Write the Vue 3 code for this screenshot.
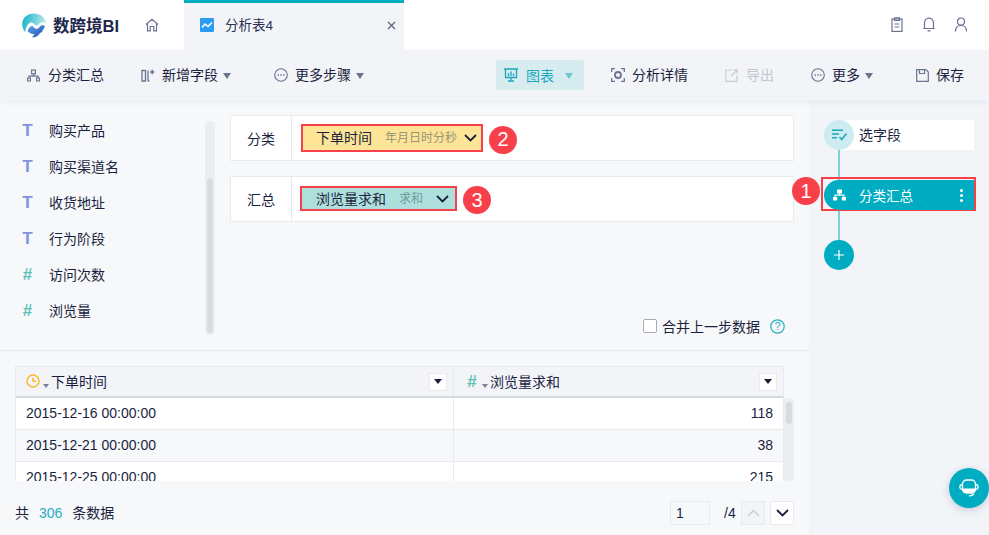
<script setup>
const fields = [
  { t: 'T', name: '购买产品' },
  { t: 'T', name: '购买渠道名' },
  { t: 'T', name: '收货地址' },
  { t: 'T', name: '行为阶段' },
  { t: '#', name: '访问次数' },
  { t: '#', name: '浏览量' }
]
const rows = [
  ['2015-12-16 00:00:00', '118'],
  ['2015-12-21 00:00:00', '38'],
  ['2015-12-25 00:00:00', '215']
]
</script>

<template>
  <div class="app">
    <header class="top">
      <div class="brand">
        <svg class="logo" width="24" height="25" viewBox="0 0 24 25">
          <defs>
            <linearGradient id="lg1" x1="0" y1="0.300" x2="1" y2="0.500">
              <stop offset="0" stop-color="#12b4c8" />
              <stop offset="1" stop-color="#c4ecee" />
            </linearGradient>
            <linearGradient id="lg2" x1="0" y1="0" x2="1" y2="1">
              <stop offset="0" stop-color="#5aa7ea" />
              <stop offset="1" stop-color="#2148b0" />
            </linearGradient>
          </defs>
          <path d="M3 19C-1 14 -.5 7 3.500 3.500C8 -.5 15 -.5 20 3C22.500 5 23.800 8 24 11C22 8.500 19 8.500 17 11C15.500 13 14 13 12.500 11.500C10 8.500 7.500 9 5.500 12C4.300 14 3.500 16.500 3 19Z" fill="url(#lg1)" />
          <path d="M5.500 18C7 14.500 9 12 11 13.500C13 16 15.500 17 17.500 14C19 12 21 11.500 23 13C21.800 14.500 22.500 16 20.500 17C21 18.500 19.500 19.500 18 20C16.500 22.500 14 24.500 10 24.500C11 23.500 12 22 12.500 21C10 21.500 7.500 20 5.500 18Z" fill="url(#lg2)" />
        </svg>
        <span class="brand-text">数跨境BI</span>
        <svg class="home" width="14" height="14" viewBox="0 0 14 14" fill="none" stroke="#6b7392" stroke-width="1.200">
          <path d="M1 6.500L7 1.200L13 6.500M2.500 5.500V12.800H5.200V8.500H8.800V12.800H11.500V5.500" />
        </svg>
      </div>
      <div class="tab">
        <svg width="14" height="14" viewBox="0 0 14 14">
          <rect width="14" height="14" rx="1" fill="#2b9bf4" />
          <path d="M2 9.500L5 6L8 8.500L12 4.500" fill="none" stroke="#fff" stroke-width="1.600" />
        </svg>
        <span class="tab-name">分析表4</span>
        <svg class="tab-x" width="9" height="9" viewBox="0 0 9 9" stroke="#5f6680" stroke-width="1.300">
          <path d="M1 1L8 8M8 1L1 8" />
        </svg>
      </div>
      <div class="top-fill">
        <svg width="14" height="15" viewBox="0 0 14 15" fill="none" stroke="#6b7392" stroke-width="1.200">
          <rect x="2" y="2" width="10" height="12.400" />
          <path d="M4.500 .8H9.500V3.500H4.500ZM4.500 7H9.500M4.500 10H9.500" />
        </svg>
        <svg width="14" height="15" viewBox="0 0 14 15" fill="none" stroke="#6b7392" stroke-width="1.200">
          <path d="M2.500 11.500V6.500C2.500 3.500 4.300 1.200 7 1.200S11.500 3.500 11.500 6.500V11.500ZM1.200 11.500H12.800M5.500 13.800H8.500" />
        </svg>
        <svg width="14" height="15" viewBox="0 0 14 15" fill="none" stroke="#6b7392" stroke-width="1.200">
          <circle cx="7" cy="4.500" r="3.500" />
          <path d="M1.500 14.500C1.500 10.500 3.500 8.500 7 8.500S12.500 10.500 12.500 14.500" />
        </svg>
      </div>
    </header>

    <nav class="toolbar">
      <div class="tool t1">
        <svg width="13" height="13" viewBox="0 0 13 13" fill="none" stroke="#6b7392" stroke-width="1.200">
          <path d="M4.600 1.100H8.400V4.800H4.600ZM6.500 4.800V7.200M2 9V7.200H11V9M.6 9H3.400V12H.6ZM9.600 9H12.400V12H9.600Z" />
        </svg>
        <span>分类汇总</span>
      </div>
      <div class="tool t2">
        <svg width="14" height="14" viewBox="0 0 14 14" fill="none" stroke="#6b7392" stroke-width="1.300">
          <path d="M1 2.500H4.500V13H1ZM7 13V2.500M7 13H8.500M9 4H13.500M11.200 1.500V6.500" />
        </svg>
        <span>新增字段</span>
        <i class="caret"></i>
      </div>
      <div class="tool t3">
        <svg width="14" height="14" viewBox="0 0 14 14" fill="none" stroke="#6b7392" stroke-width="1.100">
          <circle cx="7" cy="7" r="6.300" />
          <path d="M3.600 7H5M6.300 7H7.700M9 7H10.400" stroke-width="1.300" />
        </svg>
        <span>更多步骤</span>
        <i class="caret"></i>
      </div>
      <div class="chart-btn">
        <svg width="14" height="14" viewBox="0 0 14 14" fill="none" stroke="#1aa8bd" stroke-width="1.300">
          <path d="M0 1H14M1.500 1.500V9.500H12.500V1.500M7 9.500V13M4 13H10" />
          <path d="M4.500 8V5M7 8V3.500M9.500 8V5.500" />
        </svg>
        <span>图表</span>
        <i class="caret teal"></i>
      </div>
      <div class="tool t5">
        <svg width="14" height="14" viewBox="0 0 14 14" fill="none" stroke="#6b7392" stroke-width="1.300">
          <path d="M.7 4V.7H4M10 .7H13.300V4M13.300 10V13.300H10M4 13.300H.7V10" />
          <circle cx="7" cy="7" r="3" stroke-width="1.800" />
        </svg>
        <span>分析详情</span>
      </div>
      <div class="tool t6 off">
        <svg width="13" height="13" viewBox="0 0 13 13" fill="none" stroke="#c9ccd6" stroke-width="1.200">
          <path d="M7 1H.8V12.300H12V6.500M6 7L12 1M8.500 .8H12.200V4.500" />
        </svg>
        <span>导出</span>
      </div>
      <div class="tool t7">
        <svg width="14" height="14" viewBox="0 0 14 14" fill="none" stroke="#6b7392" stroke-width="1.100">
          <circle cx="7" cy="7" r="6.300" />
          <path d="M3.600 7H5M6.300 7H7.700M9 7H10.400" stroke-width="1.300" />
        </svg>
        <span>更多</span>
        <i class="caret"></i>
      </div>
      <div class="tool t8">
        <svg width="13" height="13" viewBox="0 0 13 13" fill="none" stroke="#6b7392" stroke-width="1.200">
          <path d="M.7 .7H10L12.300 3V12.300H.7ZM3.500 .7V4.500H8.500V.7" />
        </svg>
        <span>保存</span>
      </div>
    </nav>

    <div class="body">
      <main class="work">
        <section class="setup">
          <aside class="fields">
            <ul class="field-list">
              <li v-for="f in fields" :key="f.name" class="field">
                <span class="ftype" :class="f.t === '#' ? 'num' : 'txt'">{{ f.t }}</span>
                <span>{{ f.name }}</span>
              </li>
            </ul>
            <div class="vbar"><div class="vthumb"></div></div>
          </aside>
          <div class="config">
            <div class="card">
              <div class="card-label">分类</div>
              <div class="card-body">
                <div class="pill yellow">
                  <span class="pill-name">下单时间</span>
                  <span class="pill-sub">年月日时分秒</span>
                  <svg class="chev" width="13" height="8" viewBox="0 0 13 8" fill="none" stroke="#1b1f3f" stroke-width="1.800">
                    <path d="M1 1L6.500 6.500L12 1" />
                  </svg>
                </div>
                <span class="badge b2">2</span>
              </div>
            </div>
            <div class="card second">
              <div class="card-label">汇总</div>
              <div class="card-body">
                <div class="pill green">
                  <span class="pill-name">浏览量求和</span>
                  <span class="pill-sub">求和</span>
                  <svg class="chev" width="13" height="8" viewBox="0 0 13 8" fill="none" stroke="#1b1f3f" stroke-width="1.800">
                    <path d="M1 1L6.500 6.500L12 1" />
                  </svg>
                </div>
                <span class="badge b3">3</span>
              </div>
            </div>
            <div class="merge">
              <i class="check"></i>
              <span>合并上一步数据</span>
              <svg width="15" height="15" viewBox="0 0 15 15">
                <circle cx="7.500" cy="7.500" r="6.700" fill="none" stroke="#27aec2" stroke-width="1.200" />
                <text x="7.500" y="11.400" text-anchor="middle" font-size="11" fill="#27aec2" font-family="Liberation Sans">?</text>
              </svg>
            </div>
          </div>
        </section>

        <section class="preview">
          <div class="table-wrap">
            <div class="table">
              <div class="thead">
                <div class="th c1">
                  <svg class="clock" width="14" height="14" viewBox="0 0 14 14" fill="none" stroke="#fdb92e" stroke-width="1.500">
                    <circle cx="7" cy="7" r="6" />
                    <path d="M7 3.500V7.300H10" />
                  </svg>
                  <i class="mini"></i>
                  <span>下单时间</span>
                  <b class="sort"></b>
                </div>
                <div class="th c2">
                  <span class="ftype num hash">#</span>
                  <i class="mini"></i>
                  <span>浏览量求和</span>
                  <b class="sort"></b>
                </div>
              </div>
              <div v-for="(r, i) in rows" :key="r[0]" class="tr" :class="{ odd: i === 1 }">
                <div class="td c1">{{ r[0] }}</div>
                <div class="td c2 right">{{ r[1] }}</div>
              </div>
            </div>
            <div class="tbar"><div class="tthumb"></div></div>
          </div>
          <footer class="pager">
            <span>共</span>
            <span class="count">306</span>
            <span>条数据</span>
            <input class="page-input" value="1" aria-label="页码" />
            <span class="total">/4</span>
            <span class="pg off">
              <svg width="13" height="8" viewBox="0 0 13 8" fill="none" stroke="#d4d6df" stroke-width="1.800"><path d="M1 7L6.500 1.500L12 7" /></svg>
            </span>
            <span class="pg">
              <svg width="13" height="8" viewBox="0 0 13 8" fill="none" stroke="#1b1f3f" stroke-width="1.800"><path d="M1 1L6.500 6.500L12 1" /></svg>
            </span>
          </footer>
        </section>
      </main>

      <aside class="steps">
        <div class="step-one">
          <span class="step-dot">
            <svg width="15" height="12" viewBox="0 0 15 12" fill="none" stroke="#1fa5bb" stroke-width="1.500">
              <path d="M0 1.200H11M0 5H7M0 8.800H5M7.500 8L9.800 10.500L14.500 4.500" />
            </svg>
          </span>
          <span class="step-label">选字段</span>
        </div>
        <div class="link"></div>
        <div class="step-frame">
          <span class="badge one">1</span>
          <div class="step-active">
            <svg width="13" height="12" viewBox="0 0 13 12" fill="#fff">
              <path d="M4 .5H9V4.500H7.200V5.500H11.500V8H13V11.500H8.800V8H10.500V6.800H2.500V8H4.200V11.500H0V8H1.500V5.500H5.800V4.500H4Z" />
            </svg>
            <span>分类汇总</span>
            <i class="dots"></i>
          </div>
        </div>
        <div class="link"></div>
        <div class="plus">
          <svg width="10" height="10" viewBox="0 0 10 10" stroke="#fff" stroke-width="1.200"><path d="M5 0V10M0 5H10" /></svg>
        </div>
      </aside>
    </div>

    <button class="chat" aria-label="客服">
      <svg width="20" height="18" viewBox="0 0 20 18" fill="none" stroke="#fff" stroke-width="1.300">
        <rect x="3.500" y="1" width="13" height="13" rx="4" />
        <path d="M3.500 9.500H16.500V11Q16.500 14 13 14H7Q3.500 14 3.500 11Z" fill="#fff" stroke="none" />
        <path d="M2.800 5.500Q.8 6 .8 8T2.800 10.500M17.200 5.500Q19.200 6 19.200 8T17.200 10.500M15 14.800Q13 17 10 16.800" />
      </svg>
    </button>
  </div>
</template>

<style scoped>
* { box-sizing: border-box; }
.app {
  width: 989px;
  height: 535px;
  overflow: hidden;
  position: relative;
  display: flex;
  flex-direction: column;
  background: #f2f4f8;
  color: #1b1f3f;
  font-family: "Liberation Sans", "Noto Sans CJK SC", sans-serif;
  font-size: 14px;
}
.top { display: flex; height: 50px; background: #fff; flex: none; }
.brand { width: 184px; display: flex; align-items: center; padding-left: 22px; }
.brand-text {
  margin-left: 7px;
  font-size: 16.500px;
  font-weight: 700;
  color: #20264a;
  white-space: nowrap;
}
.home { margin-left: 26px; }
.tab {
  width: 220px;
  background: #f2f4f8;
  border-top: 3px solid #00acc1;
  display: flex;
  align-items: center;
  padding-left: 16px;
  padding-bottom: 3px;
}
.tab-name { margin-left: 11px; font-size: 13.500px; color: #2a2f4f; padding-bottom: 2px; }
.tab-x { margin-left: auto; margin-right: 8px; }
.top-fill {
  flex: 1;
  display: flex;
  justify-content: flex-end;
  align-items: center;
  gap: 18px;
  padding-right: 21px;
  padding-bottom: 2px;
}
.toolbar {
  height: 50px;
  flex: none;
  display: flex;
  align-items: center;
  background: #f2f4f8;
  box-shadow: 0 2px 6px rgba(40, 50, 90, .06);
  position: relative;
  z-index: 2;
}
.tool { display: flex; align-items: center; white-space: nowrap; }
.tool svg { flex: none; }
.tool span { line-height: 20px; }
.t1 { margin-left: 27px; }
.t1 span { margin-left: 8px; }
.t2 { margin-left: 37px; }
.t2 span { margin-left: 7px; }
.t3 { margin-left: 43px; }
.t3 span { margin-left: 7px; }
.t5 { margin-left: 27px; }
.t5 span { margin-left: 7px; }
.t6 { margin-left: 37px; color: #c4c7d2; }
.t6 span { margin-left: 8px; }
.t7 { margin-left: 37px; }
.t7 span { margin-left: 7px; }
.t8 { margin-left: 43px; }
.t8 span { margin-left: 7px; }
.caret {
  width: 0;
  height: 0;
  margin-left: 5px;
  border-left: 4px solid transparent;
  border-right: 4px solid transparent;
  border-top: 6px solid #6b7392;
  margin-top: 1px;
}
.caret.teal { border-top-color: #6fc6d3; margin-left: 11px; }
.chart-btn {
  margin-left: 132px;
  width: 88px;
  height: 30px;
  background: #d7ecef;
  border-radius: 2px;
  display: flex;
  align-items: center;
  padding-left: 8px;
  color: #1aa8bd;
}
.chart-btn span { margin-left: 8px; }
.body { flex: 1; display: flex; min-height: 0; }
.work {
  width: 809px;
  flex: none;
  background: #f7f8fa;
  display: flex;
  flex-direction: column;
}
.setup {
  height: 251px;
  flex: none;
  display: flex;
  border-bottom: 1px solid #e8eaef;
}
.fields { width: 230px; flex: none; position: relative; padding-top: 12px; }
.field-list { margin: 0; padding: 0 0 0 21px; list-style: none; }
.field { height: 36px; display: flex; align-items: center; }
.ftype {
  width: 13px;
  margin-right: 15px;
  font-family: "Liberation Sans", sans-serif;
  font-size: 17px;
  font-weight: 700;
  text-align: center;
  line-height: 1;
}
.txt { color: #8093e2; }
.num { color: #5cc2b6; }
.vbar {
  position: absolute;
  left: 205px;
  top: 21px;
  width: 10px;
  height: 214px;
  background: #ecedf1;
  border-radius: 5px;
}
.vthumb {
  position: absolute;
  left: 2px;
  top: 57px;
  width: 6px;
  height: 155px;
  background: #d9dbe1;
  border-radius: 3px;
}
.config { width: 564px; flex: none; padding-top: 15px; display: flex; flex-direction: column; }
.card {
  height: 46px;
  display: flex;
  background: #fff;
  border: 1px solid #e8eaef;
  flex: none;
}
.card.second { margin-top: 15px; }
.card-label {
  width: 61px;
  flex: none;
  border-right: 1px solid #e8eaef;
  display: flex;
  align-items: center;
  justify-content: center;
}
.card-body { flex: 1; display: flex; align-items: center; padding-left: 9px; }
.pill {
  display: flex;
  align-items: center;
  outline: 2px solid #f8404a;
  white-space: nowrap;
}
.pill-name { padding-bottom: 2px; }
.yellow { background: #fde496; width: 178px; height: 24px; margin: 0 0 1px 2px; padding-left: 13px; }
.green { background: #ade0dc; width: 153px; height: 21px; margin: 0 0 1px 1px; padding-left: 14px; }
.pill-sub { margin-left: 13px; font-size: 12px; color: #9a9478; padding-bottom: 2px; }
.green .pill-sub { color: #6f9a9a; }
.chev { margin-left: auto; margin-right: 4px; }
.green .chev { margin-right: 6px; }
.badge {
  width: 28px;
  height: 28px;
  flex: none;
  margin-left: 7px;
  border-radius: 50%;
  background: #f8404a;
  color: #fff;
  font-size: 20px;
  display: flex;
  align-items: center;
  justify-content: center;
}
.b2 { margin-left: 8px; margin-top: 3px; }
.b3 { margin-left: 8px; margin-top: 2px; }
.merge {
  display: flex;
  align-items: center;
  margin-top: 94px;
  padding-left: 413px;
  height: 20px;
  font-size: 14px;
}
.merge span { margin: 0 10px 0 5px; white-space: nowrap; padding-bottom: 1px; }
.check {
  width: 14px;
  height: 14px;
  flex: none;
  background: #fff;
  border: 1px solid #a6abbb;
  border-radius: 2px;
}
.preview { flex: 1; display: flex; flex-direction: column; min-height: 0; padding-top: 15px; }
.table-wrap { height: 115px; flex: none; display: flex; padding-left: 15px; overflow: hidden; }
.table { width: 769px; flex: none; }
.thead {
  display: flex;
  height: 32px;
  background: #f2f4f8;
  border: 1px solid #e8eaef;
  border-bottom: 2px solid #d6d8df;
}
.th { display: flex; align-items: center; position: relative; height: 100%; padding-bottom: 1px; }
.th span:not(.ftype) { padding-bottom: 1px; }
.th.c1 { padding-left: 11px; }
.th.c2 { padding-left: 11px; }
.clock { margin-left: -1px; margin-right: 1px; }
.c1 { width: 438px; flex: none; border-right: 1px solid #e8eaef; }
.c2 { flex: 1; }
.mini {
  width: 0;
  height: 0;
  margin: 9px 2px 0 2px;
  border-left: 3px solid transparent;
  border-right: 3px solid transparent;
  border-top: 4px solid #7a8098;
  flex: none;
}
.hash { margin: 0 1px 0 0; width: 14px; }
.sort {
  position: absolute;
  right: 6px;
  top: 6px;
  width: 18px;
  height: 18px;
  background: #fff;
  border: 1px solid #e8eaef;
}
.sort::after {
  content: "";
  position: absolute;
  left: 4px;
  top: 5px;
  border-left: 4px solid transparent;
  border-right: 4px solid transparent;
  border-top: 5px solid #1b1f3f;
}
.tr {
  display: flex;
  height: 32px;
  background: #fff;
  border: 1px solid #e8eaef;
  border-top: 0;
}
.tr.odd { background: #f7f8fa; }
.td { display: flex; align-items: center; font-size: 14px; padding: 0 0 2px 10px; height: 100%; }
.td.right { justify-content: flex-end; padding-right: 10px; }
.tbar {
  width: 10px;
  height: 83px;
  margin-top: 32px;
  background: #ecedf1;
  border-radius: 4px;
  position: relative;
  flex: none;
}
.tthumb {
  position: absolute;
  left: 2px;
  top: 4px;
  width: 6px;
  height: 22px;
  background: #d9dbe1;
  border-radius: 3px;
}
.pager {
  flex: 1;
  display: flex;
  align-items: center;
  padding: 9px 15px 0 15px;
  font-size: 14px;
}
.pager > span { line-height: 20px; }
.count { color: #27aec2; margin: 0 10px; }
.page-input {
  width: 40px;
  height: 24px;
  margin-left: auto;
  padding: 0 0 0 5px;
  border: 1px solid #e8eaef;
  background: #f7f8fa;
  color: #1b1f3f;
  font: 14px "Liberation Sans", sans-serif;
  outline: none;
}
.total { margin: 0 0 0 14px; width: 12px; }
.pg {
  width: 24px;
  height: 24px;
  margin-left: 5px;
  background: #fff;
  border: 1px solid #e8eaef;
  display: flex;
  align-items: center;
  justify-content: center;
}
.pg.off { background: #f2f4f8; }
.steps { flex: 1; padding: 20px 0 0 15px; }
.step-one {
  display: flex;
  align-items: center;
  height: 30px;
  width: 150px;
  background: linear-gradient(90deg, transparent 15px, #fff 15px);
}
.step-dot {
  width: 30px;
  height: 30px;
  border-radius: 50%;
  background: #cdecf1;
  display: flex;
  align-items: center;
  justify-content: center;
  flex: none;
}
.step-label { margin-left: 5px; padding-bottom: 2px; }
.link { width: 2px; height: 30px; background: #7fd0dc; margin-left: 14px; }
.step-frame {
  position: relative;
  width: 155px;
  height: 34px;
  margin: -3px 0 -1px -3px;
  padding: 1px 0 0 1px;
  border: 2px solid #f8404a;
}
.step-active {
  width: 150px;
  height: 30px;
  background: #00acc1;
  color: #fff;
  border-radius: 15px 0 0 15px;
  display: flex;
  align-items: center;
  padding-left: 9px;
  position: relative;
}
.step-active span { margin-left: 13px; font-size: 13.500px; padding-bottom: 1px; }
.badge.one { position: absolute; left: -31px; top: -2px; margin: 0; z-index: 1; }
.dots {
  position: absolute;
  right: 11px;
  top: 9px;
  width: 3px;
  height: 3px;
  background: #fff;
  border-radius: 50%;
  box-shadow: 0 5px 0 #fff, 0 10px 0 #fff;
}
.plus {
  width: 30px;
  height: 30px;
  border-radius: 50%;
  background: #00acc1;
  display: flex;
  align-items: center;
  justify-content: center;
}
.chat {
  position: absolute;
  left: 949px;
  top: 468px;
  width: 40px;
  height: 40px;
  padding: 0;
  border: 0;
  border-radius: 50%;
  background: #00acc1;
  box-shadow: 0 2px 8px rgba(40, 50, 90, .2);
  display: flex;
  align-items: center;
  justify-content: center;
}
</style>
